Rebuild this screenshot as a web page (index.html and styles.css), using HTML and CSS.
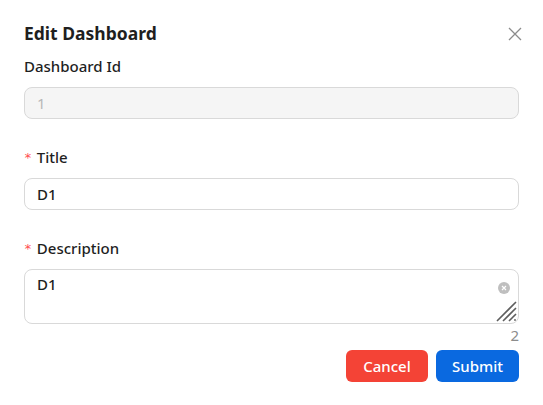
FILE: index.html
```html
<!DOCTYPE html>
<html>
<head>
<meta charset="utf-8">
<link rel="stylesheet" href="styles.css">
</head>
<body>
<div class="modal">
  <div class="header">
    <h1 class="title">Edit Dashboard</h1>
    <svg class="close" width="14" height="14" viewBox="0 0 14 14"><path d="M1 1L13 13M13 1L1 13" stroke="#8c8c8c" stroke-width="1.3" fill="none"/></svg>
  </div>
  <div class="field">
    <label class="label">Dashboard Id</label>
    <input class="input disabled" value="1" disabled>
  </div>
  <div class="field">
    <label class="label"><span class="req">*</span>Title</label>
    <input class="input" value="D1">
  </div>
  <div class="field last">
    <label class="label"><span class="req">*</span>Description</label>
    <div class="ta-wrap">
      <textarea class="textarea">D1</textarea>
      <span class="clear"><svg width="12" height="12" viewBox="0 0 12 12"><circle cx="6" cy="6" r="6" fill="#bfbfbf"/><path d="M4 4L8 8M8 4L4 8" stroke="#fff" stroke-width="1.2"/></svg></span>
      <svg class="grip" width="22" height="22" viewBox="0 0 22 22"><path d="M2 21L21 2M8 21L21 8M14 21L21 14" stroke="#5e5e5e" stroke-width="1.6" fill="none"/><circle cx="20" cy="20" r="0.9" fill="#5e5e5e"/></svg>
    </div>
    <div class="count">2</div>
  </div>
  <div class="footer">
    <button class="btn cancel">Cancel</button>
    <button class="btn submit">Submit</button>
  </div>
</div>
</body>
</html>
```
FILE: styles.css
```css
html, body { margin: 0; padding: 0; background: #fff; }
body { font-family: "Noto Sans", sans-serif; color: #1f1f1f; }
.modal { width: 543px; height: 405px; box-sizing: border-box; padding: 21px 24px 0 24px; }
.header { display: flex; justify-content: space-between; align-items: center; height: 24px; }
.title { margin: 0; font-size: 17.5px; font-weight: 700; color: #1f1f1f; }
.close { margin-right: -3px; margin-top: 2px; }
.field { margin-top: 10px; }
.field + .field { margin-top: 27px; }
.label { display: flex; align-items: center; font-size: 15px; font-weight: 500; height: 22px; color: #1f1f1f; }
.req { color: #ff4d4f; font-family: "DejaVu Sans Mono", monospace; font-size: 13px; font-weight: 400; margin-right: 5px; }
.input { display: block; box-sizing: border-box; width: 100%; height: 32px; margin-top: 10px; border: 1px solid #d9d9d9; border-radius: 8px; padding: 0 12px; font: inherit; font-size: 15px; font-weight: 500; color: #1f1f1f; background: #fff; outline: none; }
.input.disabled { background: #f5f5f5; color: #b8b8b8; font-weight: 400; }
.ta-wrap { position: relative; margin-top: 10px; }
.textarea { display: block; box-sizing: border-box; width: 100%; height: 55px; border: 1px solid #d9d9d9; border-radius: 8px; padding: 4px 12px; font: inherit; font-size: 15px; font-weight: 500; color: #1f1f1f; resize: none; outline: none; }
.clear { position: absolute; right: 9px; top: 13px; display: flex; }
.grip { position: absolute; right: 2px; bottom: 2px; }
.count { text-align: right; font-size: 15px; color: #8c8c8c; height: 20px; line-height: 20px; margin-top: 1px; }
.footer { display: flex; justify-content: flex-end; gap: 8px; margin-top: 5px; }
.btn { height: 32px; border: none; border-radius: 6px; color: #fff; font: inherit; font-size: 15px; font-weight: 500; padding: 0 16px; }
.cancel { background: #f44336; width: 82px; }
.submit { background: #0a69e0; width: 83px; }
```
